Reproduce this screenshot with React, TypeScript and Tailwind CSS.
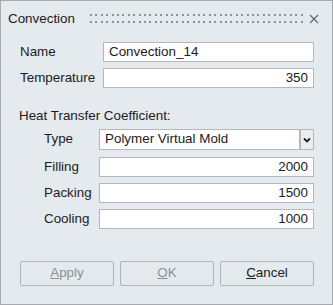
import React from "react";

const font = { fontFamily: '"Liberation Sans", Arial, sans-serif' };

function Field({ value, right = true, width }: { value: string; right?: boolean; width: string }) {
  return (
    <div
      className={`h-[20px] ${width} border border-[#b3b7bb] bg-white flex items-center px-[5px] text-[13.4px] text-[#1d1a22] ${
        right ? "justify-end" : "justify-start"
      }`}
    >
      {value}
    </div>
  );
}

function Dots() {
  const cols = Array.from({ length: 40 }, (_, i) => i);
  return (
    <svg width="215" height="12" className="block">
      {cols.map((i) => {
        const x = Math.round(i * 5.4);
        return (
          <g key={i} fill="#8c9196">
            <rect x={x} y={1} width={2} height={2} />
            <rect x={x} y={8} width={2} height={2} />
          </g>
        );
      })}
    </svg>
  );
}

export default function App() {
  return (
    <div
      style={font}
      className="w-[333px] h-[305px] border border-[#a6aaae] bg-[#e4eaee] text-[13.4px] text-[#1d1a22] flex flex-col"
    >
      {/* Title bar */}
      <div className="h-[35px] flex items-center">
        <div className="pl-[7px] w-[89px] leading-none">Convection</div>
        <div className="pt-[1px]">
          <Dots />
        </div>
        <div className="ml-[4px] pt-[1px]">
          <svg width="10" height="10" viewBox="0 0 10 10">
            <path d="M1 1 L9 9 M9 1 L1 9" stroke="#5f6368" strokeWidth="1.1" />
          </svg>
        </div>
      </div>

      {/* Body */}
      <div className="flex flex-col pt-[6px] pl-[18px]">
        <div className="flex items-center h-[20px]">
          <div className="w-[84px] pl-[1px]">Name</div>
          <Field value="Convection_14" right={false} width="w-[211px]" />
        </div>
        <div className="flex items-center h-[20px] mt-[6px]">
          <div className="w-[84px] pl-[1px]">Temperature</div>
          <Field value="350" width="w-[211px]" />
        </div>

        <div className="mt-[20px] h-[16px] flex items-center">Heat Transfer Coefficient:</div>

        <div className="flex items-center h-[21px] mt-[5px] pl-[25px]">
          <div className="w-[55px]">Type</div>
          <div className="h-[21px] w-[201px] border border-[#b3b7bb] bg-white flex items-center px-[5px]">
            Polymer Virtual Mold
          </div>
          <div className="h-[21px] w-[14px] border border-[#b3b7bb] bg-[#e9eef1] flex items-center justify-center">
            <svg width="8" height="6" viewBox="0 0 8 6">
              <path d="M1 1.5 L4 4.5 L7 1.5" stroke="#1d1a22" strokeWidth="1.8" fill="none" />
            </svg>
          </div>
        </div>

        <div className="flex items-center h-[20px] mt-[7px] pl-[25px]">
          <div className="w-[55px]">Filling</div>
          <Field value="2000" width="w-[215px]" />
        </div>
        <div className="flex items-center h-[20px] mt-[6px] pl-[25px]">
          <div className="w-[55px]">Packing</div>
          <Field value="1500" width="w-[215px]" />
        </div>
        <div className="flex items-center h-[20px] mt-[6px] pl-[25px]">
          <div className="w-[55px]">Cooling</div>
          <Field value="1000" width="w-[215px]" />
        </div>

        <div className="flex mt-[32px] gap-[6px] pl-[1px]">
          <div className="w-[94px] h-[25px] border border-[#b1b5b9] rounded-[2px] flex items-center justify-center text-[#8b9095]">
            <span>
              <u>A</u>pply
            </span>
          </div>
          <div className="w-[94px] h-[25px] border border-[#b1b5b9] rounded-[2px] flex items-center justify-center text-[#8b9095]">
            <span>
              <u>O</u>K
            </span>
          </div>
          <div className="w-[94px] h-[25px] border border-[#b1b5b9] rounded-[2px] flex items-center justify-center">
            <span>
              <u>C</u>ancel
            </span>
          </div>
        </div>
      </div>
    </div>
  );
}
